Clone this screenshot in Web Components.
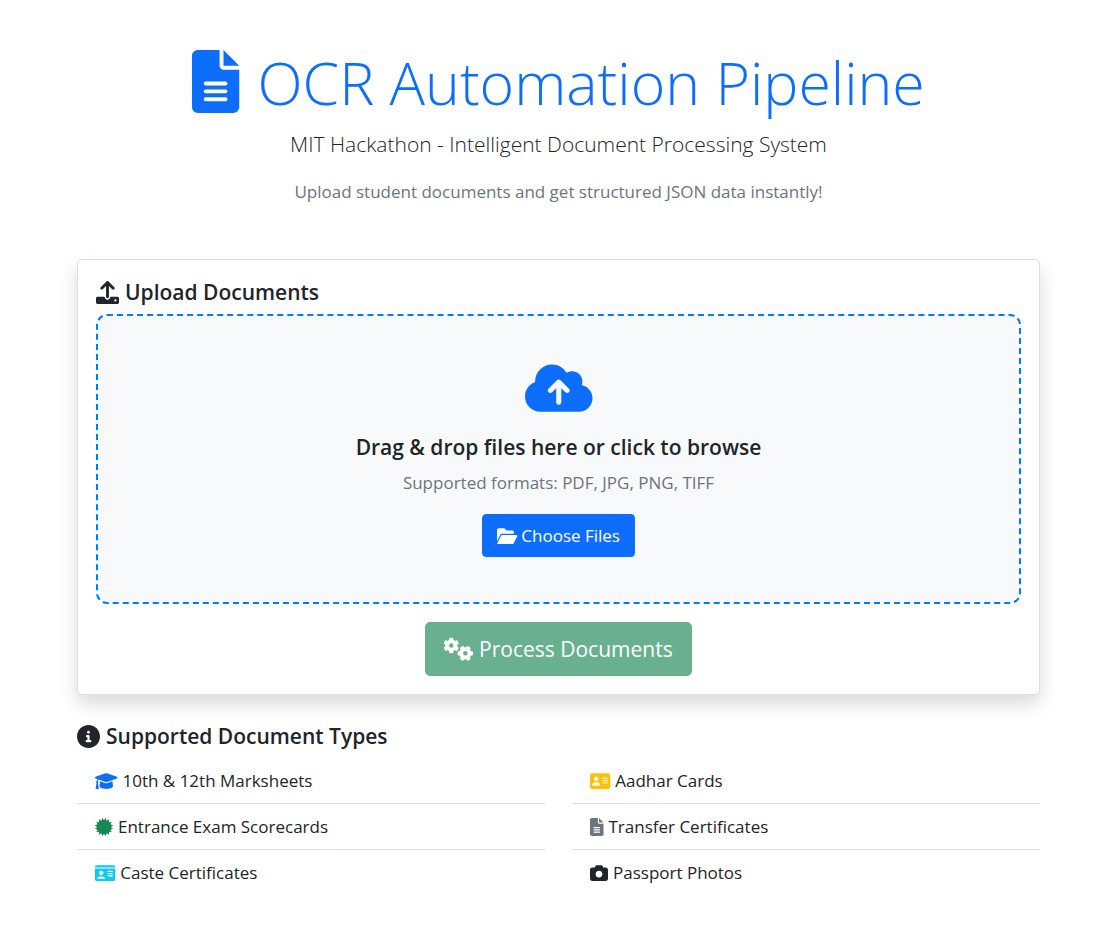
<!DOCTYPE html>
<html lang="en">
<head>
<meta charset="utf-8">
<meta name="viewport" content="width=device-width, initial-scale=1">
<title>OCR Automation Pipeline</title>
<style>
body { margin: 0; background: #fff; color: #212529; font: 17px/27px "Open Sans", "Noto Sans", sans-serif; }
</style>
</head>
<body>
<ocr-page></ocr-page>
<script>
const starburst = (n, cx, cy, outer, inner) => {
  let d = '';
  for (let i = 0; i < n * 2; i++) {
    const r = i % 2 ? outer : inner, a = Math.PI * i / n - Math.PI / 2;
    d += (i ? 'L' : 'M') + (cx + r * Math.cos(a)).toFixed(1) + ' ' + (cy + r * Math.sin(a)).toFixed(1);
  }
  return d + 'z';
};
const gear = (cx, cy, turn) => {
  let teeth = '';
  for (let i = 0; i < 6; i++) {
    teeth += `<rect x="-48" y="-172" width="96" height="90" rx="26" transform="rotate(${turn + i * 60})"/>`;
  }
  return `<g transform="translate(${cx} ${cy})">${teeth}<circle r="92" fill="none" stroke="currentColor" stroke-width="84"/></g>`;
};
const path = d => `<path fill-rule="evenodd" d="${d}"/>`;
const ICONS = {
  file: [384, path('M256 0v128h128L256 0zM224 128L224 0H48C21.49 0 0 21.49 0 48v416C0 490.5 21.49 512 48 512h288c26.51 0 48-21.49 48-48V160h-127.1C238.3 160 224 145.7 224 128zM272 416h-160C103.2 416 96 408.8 96 400C96 391.2 103.2 384 112 384h160c8.836 0 16 7.162 16 16C288 408.8 280.8 416 272 416zM272 352h-160C103.2 352 96 344.8 96 336C96 327.2 103.2 320 112 320h160c8.836 0 16 7.162 16 16C288 344.8 280.8 352 272 352zM288 272C288 280.8 280.8 288 272 288h-160C103.2 288 96 280.8 96 272C96 263.2 103.2 256 112 256h160C280.8 256 288 263.2 288 272z')],
  upload: [512, path('M105.4 182.6c12.5 12.49 32.76 12.5 45.25 .001L224 109.3V352c0 17.67 14.33 32 32 32c17.67 0 32-14.33 32-32V109.3l73.38 73.38c12.49 12.49 32.75 12.49 45.25-.001c12.49-12.49 12.49-32.75 0-45.25l-128-128C272.4 3.125 264.2 0 256 0S239.6 3.125 233.4 9.375L105.4 137.4C92.88 149.9 92.88 170.1 105.4 182.6zM480 352h-160c0 35.35-28.65 64-64 64s-64-28.65-64-64H32c-17.67 0-32 14.33-32 32v96c0 17.67 14.33 32 32 32h448c17.67 0 32-14.33 32-32v-96C512 366.3 497.7 352 480 352zM432 456c-13.2 0-24-10.8-24-24c0-13.2 10.8-24 24-24s24 10.8 24 24C456 445.2 445.2 456 432 456z')],
  cloud: [640, path('M144 480C64.47 480 0 415.5 0 336C0 273.2 40.17 219.8 96.2 200.1C96.07 197.4 96 194.7 96 192C96 103.6 167.6 32 256 32C315.3 32 367 64.25 394.7 112.2C409.9 101.1 428.3 96 448 96C501 96 544 138.1 544 192C544 204.2 541.7 215.8 537.6 226.6C596 238.4 640 290.1 640 352C640 422.7 582.7 480 512 480H144zM223 263C213.7 272.4 213.7 287.6 223 296.9C232.4 306.3 247.6 306.3 256.9 296.9L296 257.9V392C296 405.3 306.7 416 320 416C333.3 416 344 405.3 344 392V257.9L383 296.9C392.4 306.3 407.6 306.3 416.9 296.9C426.3 287.6 426.3 272.4 416.9 263L336.9 183C327.6 173.7 312.4 173.7 303 183L223 263z')],
  folder: [576, path('M147.8 192H480V144C480 117.5 458.5 96 432 96h-160l-64-64h-160C21.49 32 0 53.49 0 80v328.4l90.54-181.1C101.4 205.6 123.4 192 147.8 192zM543.1 224H147.8C135.7 224 124.6 230.8 119.2 241.7L0 480h447.1c12.12 0 23.2-6.852 28.62-17.69l96-192C583.2 249 567.7 224 543.1 224z')],
  gears: [640, gear(162, 168, 0) + gear(475, 342, 30)],
  info: [512, path('M256 0C114.6 0 0 114.6 0 256s114.6 256 256 256s256-114.6 256-256S397.4 0 256 0zM256 128c17.67 0 32 14.33 32 32c0 17.67-14.33 32-32 32S224 177.7 224 160C224 142.3 238.3 128 256 128zM296 384h-80C202.8 384 192 373.3 192 360s10.75-24 24-24h16v-64H224c-13.25 0-24-10.75-24-24S210.8 224 224 224h32c13.25 0 24 10.75 24 24v88h16c13.25 0 24 10.75 24 24S309.3 384 296 384z')],
  cap: [640, path('M623.1 136.9l-282.7-101.2c-13.73-4.91-29.7-4.91-43.43 0L16.05 136.9C6.438 140.4 0 149.6 0 160s6.438 19.65 16.05 23.09L76.07 204.6c-11.89 15.8-20.26 34.16-24.55 53.95C40.05 263.4 32 274.8 32 288c0 9.953 4.814 18.49 11.94 24.36l-24.83 149C17.48 471.1 25 480 34.89 480H93.11c9.887 0 17.41-8.879 15.78-18.63l-24.83-149C91.19 306.5 96 297.1 96 288c0-10.29-5.174-19.03-12.72-24.89c4.252-17.76 12.88-33.82 24.94-47.03l190.6 68.23c13.73 4.91 29.7 4.91 43.43 0l282.7-101.2C633.6 179.6 640 170.4 640 160S633.6 140.4 623.1 136.9zM351.1 314.4C341.7 318.5 330.9 320 320 320c-10.92 0-21.69-1.867-32-5.555L142.8 262.5L128 405.3C128 446.6 213.1 480 320 480c105.1 0 192-33.4 192-74.67l-14.78-142.9L351.1 314.4z')],
  certificate: [512, path(starburst(16, 256, 256, 264, 196))],
  idcard: [576, path('M528 32H48C21.5 32 0 53.5 0 80v16h576V80C576 53.5 554.5 32 528 32zM0 432c0 26.5 21.5 48 48 48h480c26.5 0 48-21.5 48-48V128H0V432zM368 192h128c8.8 0 16 7.2 16 16s-7.2 16-16 16H368c-8.8 0-16-7.2-16-16S359.2 192 368 192zM368 256h128c8.8 0 16 7.2 16 16s-7.2 16-16 16H368c-8.8 0-16-7.2-16-16S359.2 256 368 256zM368 320h128c8.8 0 16 7.2 16 16s-7.2 16-16 16H368c-8.8 0-16-7.2-16-16S359.2 320 368 320zM176 192c35.3 0 64 28.7 64 64s-28.7 64-64 64s-64-28.7-64-64S140.7 192 176 192zM144 352h64c44.2 0 80 20 80 48c0 8.8-7.2 16-16 16H80c-8.8 0-16-7.2-16-16C64 372 99.8 352 144 352z')],
  address: [576, path('M512 32H64C28.7 32 0 60.7 0 96v320c0 35.3 28.7 64 64 64h448c35.3 0 64-28.7 64-64V96C576 60.7 547.3 32 512 32zM368 160h128c8.8 0 16 7.2 16 16s-7.2 16-16 16H368c-8.8 0-16-7.2-16-16S359.2 160 368 160zM368 224h128c8.8 0 16 7.2 16 16s-7.2 16-16 16H368c-8.8 0-16-7.2-16-16S359.2 224 368 224zM368 288h128c8.8 0 16 7.2 16 16s-7.2 16-16 16H368c-8.8 0-16-7.2-16-16S359.2 288 368 288zM176 128c35.3 0 64 28.7 64 64s-28.7 64-64 64s-64-28.7-64-64S140.7 128 176 128zM144 288h64c44.2 0 80 35.8 80 80c0 8.8-7.2 16-16 16H80c-8.8 0-16-7.2-16-16C64 323.8 99.8 288 144 288z')],
  camera: [512, path('M194.6 32H317.4C338.1 32 356.4 45.22 362.9 64.82L373.3 96H448C483.3 96 512 124.7 512 160V416C512 451.3 483.3 480 448 480H64C28.65 480 0 451.3 0 416V160C0 124.7 28.65 96 64 96H138.7L149.1 64.82C155.6 45.22 173.9 32 194.6 32zM256 384C309 384 352 341 352 288C352 234.1 309 192 256 192C202.1 192 160 234.1 160 288C160 341 202.1 384 256 384z')]
};

const define = (name, html, setup) => customElements.define(name, class extends HTMLElement {
  connectedCallback() {
    if (this.shadowRoot) return;
    const t = document.createElement('template');
    t.innerHTML = html;
    this.attachShadow({ mode: 'open' }).append(t.content.cloneNode(true));
    if (setup) setup.call(this, this.shadowRoot);
  }
});

define('ui-icon', `
<style>
  :host { display: block; flex: none; height: var(--icon-size, 18px); }
  svg { display: block; height: 100%; width: auto; overflow: visible; fill: currentColor; }
</style>
<svg aria-hidden="true"></svg>`, function (root) {
  const [width, body] = ICONS[this.getAttribute('name')];
  const svg = root.querySelector('svg');
  svg.setAttribute('viewBox', `0 0 ${width} 512`);
  svg.innerHTML = body;
});

define('section-title', `
<style>
  :host { display: block; --icon-size: 23px; }
  h5 { display: flex; align-items: center; gap: 6px; margin: 0 0 8px; font-size: 21px; line-height: 28px; font-weight: 600; }
</style>
<h5><slot name="icon"></slot><slot></slot></h5>`);

define('ui-button', `
<style>
  :host { display: inline-block; }
  button { display: flex; align-items: center; gap: 4px; margin: 0; padding: 7px 14px; border: 1px solid #0d6efd; border-radius: 4px; background: #0d6efd; color: #fff; font: inherit; cursor: pointer; }
  :host([variant="success"]) { --icon-size: 23px; }
  :host([variant="success"]) button { gap: 6px; padding: 9px 18px; border-color: #198754; border-radius: 5px; background: #198754; font-size: 21px; line-height: 34px; opacity: .65; cursor: default; }
</style>
<button type="button"><slot name="icon"></slot><slot></slot></button>`, function (root) {
  root.querySelector('button').disabled = this.hasAttribute('disabled');
});

define('page-header', `
<style>
  :host { display: block; text-align: center; margin-bottom: 54px; }
  h1 { display: flex; align-items: center; justify-content: center; gap: 18px; margin: 0 0 8px; color: #0d6efd; font-size: 59px; line-height: 76px; font-weight: 300; --icon-size: 63px; }
  .title { padding-top: 2px; line-height: 74px; }
  .lead { margin: 0 0 17px; font-size: 21px; line-height: 34px; font-weight: 300; }
  .hint { margin: 0; color: #6c757d; }
</style>
<h1><ui-icon name="file"></ui-icon><span class="title"><slot name="title"></slot></span></h1>
<p class="lead"><slot name="lead"></slot></p>
<p class="hint"><slot></slot></p>`);

define('drop-zone', `
<style>
  :host { display: block; }
  .zone { display: flex; flex-direction: column; align-items: center; padding: 45px; border: 2px dashed #007bff; border-radius: 11px; background: #f8f9fa; text-align: center; }
  .cloud { color: #0d6efd; --icon-size: 54px; margin-bottom: 18px; }
  h5 { margin: 0 0 8px; font-size: 21px; line-height: 28px; font-weight: 600; }
  p { margin: 0 0 18px; color: #6c757d; }
</style>
<div class="zone">
  <ui-icon class="cloud" name="cloud"></ui-icon>
  <h5>Drag &amp; drop files here or click to browse</h5>
  <p>Supported formats: PDF, JPG, PNG, TIFF</p>
  <ui-button><ui-icon slot="icon" name="folder"></ui-icon>Choose Files</ui-button>
</div>`);

define('upload-card', `
<style>
  :host { display: block; padding: 18px; border: 1px solid #dfdfdf; border-radius: 5px; background: #fff; box-shadow: 0 9px 18px rgba(0, 0, 0, .15); }
  .actions { display: flex; justify-content: center; margin-top: 18px; }
</style>
<section-title><ui-icon slot="icon" name="upload"></ui-icon>Upload Documents</section-title>
<drop-zone></drop-zone>
<div class="actions"><ui-button variant="success" disabled><ui-icon slot="icon" name="gears"></ui-icon>Process Documents</ui-button></div>`);

define('doc-type', `
<style>
  :host { display: flex; align-items: center; gap: 5px; padding: 9px 18px; border-bottom: 1px solid #dfdfdf; }
  :host(:last-child) { border-bottom: 0; }
  ui-icon { color: var(--tone); }
</style>
<slot></slot>`, function (root) {
  this.setAttribute('role', 'listitem');
  this.style.setProperty('--tone', this.getAttribute('tone'));
  const icon = document.createElement('ui-icon');
  icon.setAttribute('name', this.getAttribute('icon'));
  root.querySelector('slot').before(icon);
});

define('doc-list', `
<style>:host { display: block; }</style>
<div role="list"><slot></slot></div>`);

define('ocr-page', `
<style>
  :host { display: block; padding: 43px 72px 38px 77px; }
  .types { margin-top: 27px; }
  .columns { display: grid; grid-template-columns: 1fr 1fr; gap: 27px; }
</style>
<main>
  <page-header>
    <span slot="title">OCR Automation Pipeline</span>
    <span slot="lead">MIT Hackathon - Intelligent Document Processing System</span>
    Upload student documents and get structured JSON data instantly!
  </page-header>
  <upload-card></upload-card>
  <section class="types">
    <section-title><ui-icon slot="icon" name="info"></ui-icon>Supported Document Types</section-title>
    <div class="columns">
      <doc-list>
        <doc-type icon="cap" tone="#0d6efd">10th &amp; 12th Marksheets</doc-type>
        <doc-type icon="certificate" tone="#198754">Entrance Exam Scorecards</doc-type>
        <doc-type icon="idcard" tone="#0dcaf0">Caste Certificates</doc-type>
      </doc-list>
      <doc-list>
        <doc-type icon="address" tone="#ffc107">Aadhar Cards</doc-type>
        <doc-type icon="file" tone="#6c757d">Transfer Certificates</doc-type>
        <doc-type icon="camera" tone="#212529">Passport Photos</doc-type>
      </doc-list>
    </div>
  </section>
</main>`);
</script>
</body>
</html>
